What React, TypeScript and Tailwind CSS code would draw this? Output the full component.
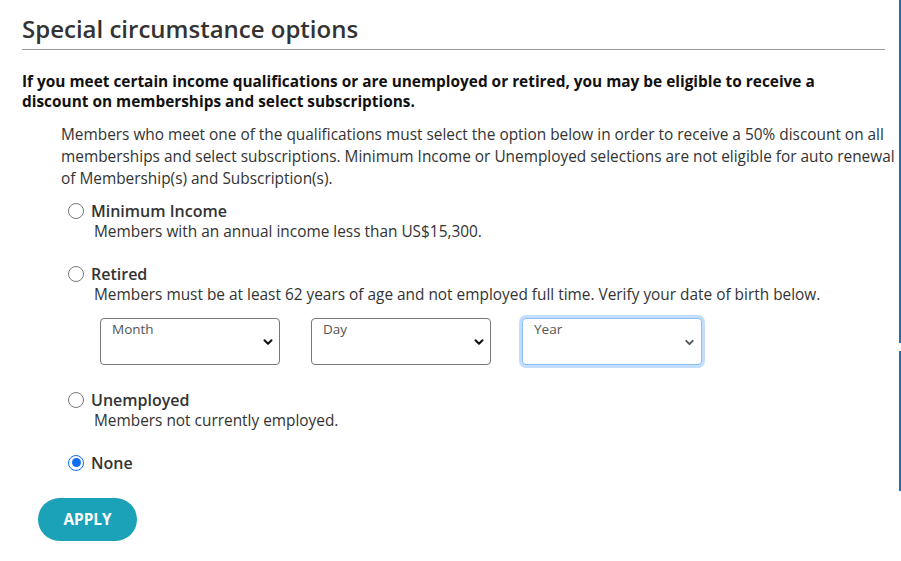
import { ChevronDown } from "lucide-react";

type Option = {
  id: string;
  label: string;
  desc?: string;
  checked?: boolean;
};

function Radio({ checked }: { checked?: boolean }) {
  return checked ? (
    <span className="flex size-[16px] shrink-0 items-center justify-center rounded-full border-[1.5px] border-[#0f6ff0] bg-white">
      <span className="size-[9px] rounded-full bg-[#0f6ff0]" />
    </span>
  ) : (
    <span className="size-[16px] shrink-0 rounded-full border border-[#7a7a7a] bg-white" />
  );
}

function DateSelect({ label, focused }: { label: string; focused?: boolean }) {
  return (
    <div
      className={
        focused
          ? "relative h-[47px] w-[180px] rounded-[4px] border border-[#8cc0f5] bg-white shadow-[0_0_0_3px_rgba(120,180,250,0.45)]"
          : "relative h-[47px] w-[180px] rounded-[4px] border border-[#777] bg-white"
      }
    >
      <span className="absolute left-[11px] top-0 text-[13.5px] text-[#555]">{label}</span>
      <ChevronDown
        className={focused ? "absolute right-[5px] top-[17px] size-[13px] text-[#555]" : "absolute right-[4px] top-[16px] size-[14px] text-[#111]"}
        strokeWidth={3.5}
      />
    </div>
  );
}

function OptionRow({ opt, children }: { opt: Option; children?: React.ReactNode }) {
  return (
    <div className="pl-[46px]">
      <label className="flex h-[21px] items-center gap-[7px]">
        <Radio checked={opt.checked} />
        <span className="text-[16px] font-semibold text-[#333]">{opt.label}</span>
      </label>
      {opt.desc ? (
        <p className="pl-[26px] text-[15.4px] leading-[21px] text-[#333]">{opt.desc}</p>
      ) : null}
      {children}
    </div>
  );
}

export default function App() {
  return (
    <div
      className="relative h-[561px] w-[901px] overflow-hidden bg-white"
      style={{ fontFamily: '"Open Sans", "Liberation Sans", sans-serif' }}
    >
      <div className="absolute right-0 top-0 h-[343px] w-[2px] bg-[#1d6fb3]" />
      <div className="absolute right-0 top-[351px] h-[140px] w-[2px] bg-[#1d6fb3]" />

      <div className="pl-[22px] pt-[14px]">
        <h2 className="w-[863px] border-b border-[#999] pb-[6px] text-[24px] font-semibold leading-[29px] text-[#333]">
          Special circumstance options
        </h2>

        <p className="mt-[22px] w-[810px] text-[15.4px] font-bold leading-[20px] text-[#111]">
          If you meet certain income qualifications or are unemployed or retired, you may be eligible to receive a
          discount on memberships and select subscriptions.
        </p>

        <p className="ml-[39px] mt-[12px] w-[840px] text-[15.4px] leading-[22px] text-[#333]">
          Members who meet one of the qualifications must select the option below in order to receive a 50% discount on all
          memberships and select subscriptions. Minimum Income or Unemployed selections are not eligible for auto renewal
          of Membership(s) and Subscription(s).
        </p>

        <div className="mt-[10px] flex flex-col">
          <OptionRow opt={{ id: "income", label: "Minimum Income", desc: "Members with an annual income less than US$15,300." }} />
          <div className="h-[21px]" />
          <OptionRow
            opt={{
              id: "retired",
              label: "Retired",
              desc: "Members must be at least 62 years of age and not employed full time. Verify your date of birth below.",
            }}
          >
            <div className="ml-[32px] mt-[13px] flex gap-[31px]">
              <DateSelect label="Month" />
              <DateSelect label="Day" />
              <DateSelect label="Year" focused />
            </div>
          </OptionRow>
          <div className="h-[24px]" />
          <OptionRow opt={{ id: "unemployed", label: "Unemployed", desc: "Members not currently employed." }} />
          <div className="h-[21px]" />
          <OptionRow opt={{ id: "none", label: "None", checked: true }} />
        </div>

        <button className="ml-[16px] mt-[25px] h-[43px] w-[99px] rounded-full bg-[#1ba2b8] text-[15.4px] font-bold text-white">
          APPLY
        </button>
      </div>
    </div>
  );
}
